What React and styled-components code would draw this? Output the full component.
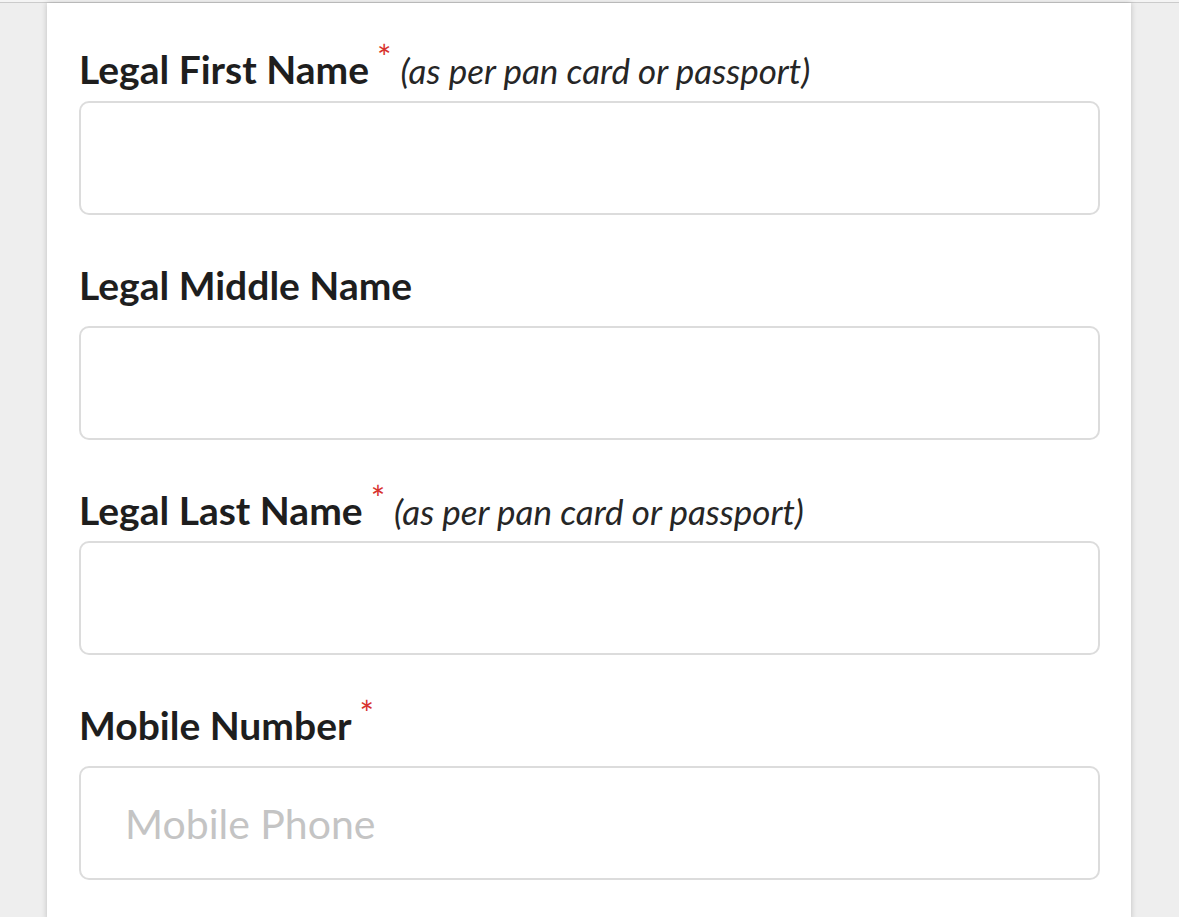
import styled, { createGlobalStyle } from "styled-components";

const GlobalStyle = createGlobalStyle`
  html, body {
    margin: 0;
    padding: 0;
    background: #eeeeee;
    font-family: Lato, "Open Sans", "Liberation Sans", sans-serif;
  }
`;

const fields = [
  { label: "Legal First Name", required: true, hint: "(as per pan card or passport)" },
  { label: "Legal Middle Name" },
  { label: "Legal Last Name", required: true, hint: "(as per pan card or passport)" },
  { label: "Mobile Number", required: true, placeholder: "Mobile Phone", type: "tel" },
];

const App = () => {
  return (
    <>
      <GlobalStyle />
      <TopRule />
      <Page>
        <Card>
          <Form onSubmit={(e) => e.preventDefault()}>
            {fields.map((f) => (
              <Field key={f.label}>
                <Label $tight={!!f.hint}>
                  {f.label}
                  {f.required && <Required>*</Required>}
                  {f.hint && <Hint>{f.hint}</Hint>}
                </Label>
                <Input type={f.type || "text"} placeholder={f.placeholder || ""} />
              </Field>
            ))}
          </Form>
        </Card>
      </Page>
    </>
  );
};

const TopRule = styled.div`
  height: 2px;
  background: #f4f4f4;
  border-bottom: 1px solid #cbcbcb;
`;

const Page = styled.main`
  display: flex;
  padding: 0 48px 0 47px;
  min-height: 914px;
`;

const Card = styled.section`
  flex: 1;
  background: #ffffff;
  box-shadow: 0 0 6px rgba(0, 0, 0, 0.2);
  padding: 43px 31px 40px 32px;
`;

const Form = styled.form`
  display: flex;
  flex-direction: column;
  gap: 47px;
`;

const Field = styled.div`
  display: flex;
  flex-direction: column;
`;

const Label = styled.label`
  font-size: 39px;
  font-weight: 700;
  line-height: 1.2;
  color: #1e1e1e;
  margin-bottom: ${({ $tight }) => ($tight ? "8px" : "17px")};
  white-space: nowrap;
`;

const Required = styled.span`
  color: #d8322e;
  font-size: 34px;
  font-weight: 400;
  line-height: 0;
  vertical-align: super;
  margin-left: 8px;
`;

const Hint = styled.span`
  font-size: 35px;
  font-style: italic;
  font-weight: 400;
  color: #262626;
  margin-left: 9px;
`;

const Input = styled.input`
  box-sizing: border-box;
  width: 100%;
  height: 114px;
  border: 2px solid #dcdcdc;
  border-radius: 10px;
  background: #ffffff;
  padding: 0 44px;
  font-family: inherit;
  font-size: 41px;
  color: #222222;
  outline: none;

  &::placeholder {
    color: #c4c4c4;
  }
`;

export default App;
